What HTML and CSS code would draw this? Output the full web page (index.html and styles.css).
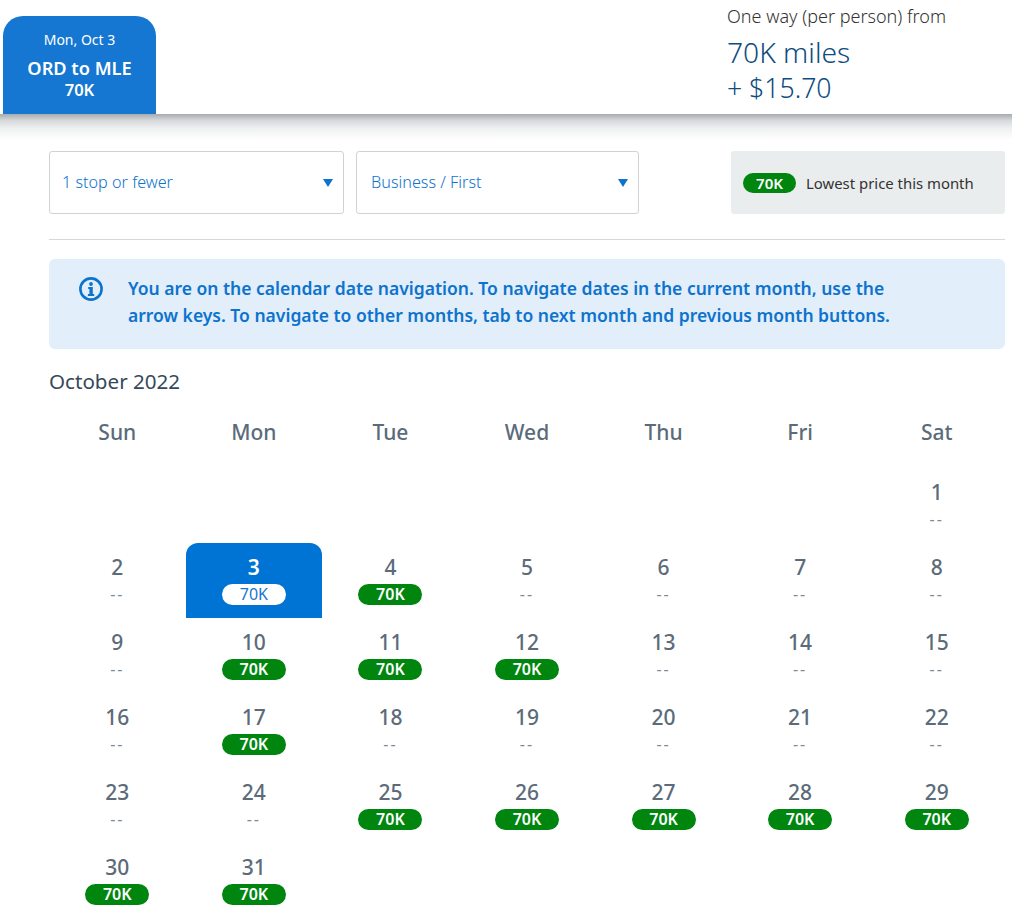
FILE: index.html
```html
<!DOCTYPE html>
<html lang="en">
<head>
    <meta charset="UTF-8">
    <meta name="viewport" content="width=device-width, initial-scale=1.0">
    <title>Choose flights</title>
    <link rel="stylesheet" href="styles.css">
</head>
<body>

    <header class="summary">
        <div class="trip-tab">
            <div class="trip-date">Mon, Oct 3</div>
            <div class="trip-route">ORD to MLE</div>
            <div class="trip-price">70K</div>
        </div>
        <div class="fare">
            <div class="fare-label">One way (per person) from</div>
            <div class="fare-amount">70K miles</div>
            <div class="fare-amount fare-cash">+ $15.70</div>
        </div>
    </header>

    <main class="content">
        <div class="filters">
            <div class="select select-stops"><span>1 stop or fewer</span><i class="caret"></i></div>
            <div class="select select-cabin"><span>Business / First</span><i class="caret"></i></div>
            <div class="legend"><span class="pill pill-legend">70K</span><span>Lowest price this month</span></div>
        </div>

        <div class="notice">
            <svg class="notice-icon" viewBox="0 0 24 24" width="24" height="24">
                <circle cx="12" cy="12" r="10.6" fill="none" stroke="#0d73cd" stroke-width="2.6"/>
                <circle cx="12" cy="7" r="1.9" fill="#0d73cd"/>
                <path d="M9.2 10h4.6v7h1.4v2H8.9v-2h1.5v-5H9.2z" fill="#0d73cd"/>
            </svg>
            <p>You are on the calendar date navigation. To navigate dates in the current month, use the arrow keys. To navigate to other months, tab to next month and previous month buttons.</p>
        </div>

        <h2 class="month">October 2022</h2>

        <div class="weekdays">
            <div>Sun</div><div>Mon</div><div>Tue</div><div>Wed</div><div>Thu</div><div>Fri</div><div>Sat</div>
        </div>

        <div class="calendar" id="calendar"></div>
    </main>

    <script>
        let withPrice = [3, 4, 10, 11, 12, 17, 25, 26, 27, 28, 29, 30, 31];
        let calendar = document.getElementById("calendar");
        let html = "";

        // October 2022 starts on a Saturday
        for (let i = 0; i < 6; i++) {
            html += `<div class="day"></div>`;
        }

        for (let d = 1; d <= 31; d++) {
            let price = `<span class="none">--</span>`;
            if (withPrice.includes(d)) {
                price = `<span class="pill">70K</span>`;
            }
            html += `<div class="day ${d === 3 ? "selected" : ""}"><span class="num">${d}</span>${price}</div>`;
        }

        calendar.innerHTML = html;
    </script>
</body>
</html>
```

FILE: styles.css
```css
body {
    margin: 0;
    font-family: "Noto Sans", "Open Sans", Arial, sans-serif;
    background: #fff;
    color: #36495a;
    overflow: hidden;
}
.summary {
    display: flex;
    justify-content: space-between;
    height: 114px;
    padding-left: 3px;
    background: #fff;
    position: relative;
    box-sizing: border-box;
}
/* soft shadow that falls below the header */
.summary::after {
    content: "";
    position: absolute;
    left: 0;
    right: 0;
    top: 100%;
    height: 26px;
    background: linear-gradient(to bottom, #a6abae, #d6d9db 25%, #eff0f1 55%, #fff);
}
.trip-tab {
    width: 153px;
    margin-top: 16px;
    padding-top: 15px;
    box-sizing: border-box;
    background: #1577d1;
    border-radius: 20px 20px 0 0;
    color: #fff;
    text-align: center;
}
.trip-date {
    font-size: 14px;
    line-height: 18px;
}
.trip-route {
    font-size: 18.2px;
    font-weight: 600;
    line-height: 24px;
    margin-top: 7px;
}
.trip-price {
    font-size: 16.5px;
    font-weight: 600;
    line-height: 22px;
    margin-top: -1px;
}
.fare {
    width: 285px;
    box-sizing: border-box;
}
.fare-label {
    font-size: 18px;
    font-weight: 300;
    line-height: 22px;
    margin-top: 5px;
    color: #333;
}
.fare-amount {
    font-size: 28.2px;
    font-weight: 300;
    line-height: 36px;
    color: #0e4d80;
}
.fare-cash {
    font-size: 26.6px;
}
.fare-label + .fare-amount {
    margin-top: 7px;
}
.content {
    padding: 37px 7px 0 49px;
}
.filters {
    display: flex;
    height: 63px;
    padding-bottom: 25px;
    border-bottom: 1px solid #d5d9dc;
}
.select {
    display: flex;
    justify-content: space-between;
    align-items: center;
    box-sizing: border-box;
    padding: 0 10px 2px 12px;
    border: 1px solid #ced3d7;
    border-radius: 3px;
    font-size: 16.2px;
    font-weight: 300;
    color: #0d73cd;
}
.select-stops {
    width: 295px;
    margin-right: 12px;
}
.select-cabin {
    width: 283px;
    padding-left: 14px;
    margin-right: 92px;
}
.caret {
    width: 0;
    height: 0;
    margin-top: 2px;
    border-left: 5px solid transparent;
    border-right: 5px solid transparent;
    border-top: 8px solid #0d73cd;
}
.legend {
    display: flex;
    align-items: center;
    gap: 10px;
    width: 274px;
    padding: 1px 0 0 12px;
    box-sizing: border-box;
    background: #eaedee;
    border-radius: 3px;
    font-size: 14.9px;
    color: #333;
}
.pill {
    display: block;
    width: 64px;
    height: 21px;
    line-height: 21px;
    border-radius: 11px;
    background: #00850f;
    color: #fff;
    font-size: 16px;
    font-weight: 600;
    text-align: center;
}
.pill-legend {
    width: 53px;
    height: 20px;
    line-height: 20px;
    font-size: 15px;
}
.notice {
    display: flex;
    height: 90px;
    margin-top: 19px;
    padding: 16px 100px 0 30px;
    box-sizing: border-box;
    background: #e2eef9;
    border-radius: 6px;
}
.notice-icon {
    flex: none;
    margin-top: 2px;
    margin-right: 25px;
}
.notice p {
    margin: 0;
    font-size: 17.5px;
    font-weight: 600;
    line-height: 27px;
    color: #0d73cd;
}
.month {
    margin: 18px 0 0;
    font-size: 20.6px;
    font-weight: 400;
    line-height: 28px;
    color: #36495a;
}
.weekdays, .calendar {
    display: grid;
    grid-template-columns: repeat(7, 1fr);
    text-align: center;
}
.weekdays {
    margin-top: 22px;
    height: 30px;
    font-size: 21px;
    font-weight: 500;
    line-height: 30px;
    color: #5b6b79;
}
.calendar {
    margin-top: 21px;
    grid-auto-rows: 75px;
}
.day {
    display: flex;
    flex-direction: column;
    align-items: center;
    padding-top: 10px;
    box-sizing: border-box;
    color: #5b6b79;
}
.num {
    font-size: 21px;
    font-weight: 500;
    line-height: 28px;
    margin-bottom: 3px;
}
.none {
    font-size: 16px;
    letter-spacing: 2px;
    line-height: 21px;
    color: #7d8a95;
}
.selected {
    background: #0074d4;
    border-radius: 12px 12px 0 0;
    color: #fff;
}
.selected .num {
    font-weight: 600;
}
.selected .pill {
    background: #fff;
    color: #1577d1;
    font-weight: 400;
}
```
